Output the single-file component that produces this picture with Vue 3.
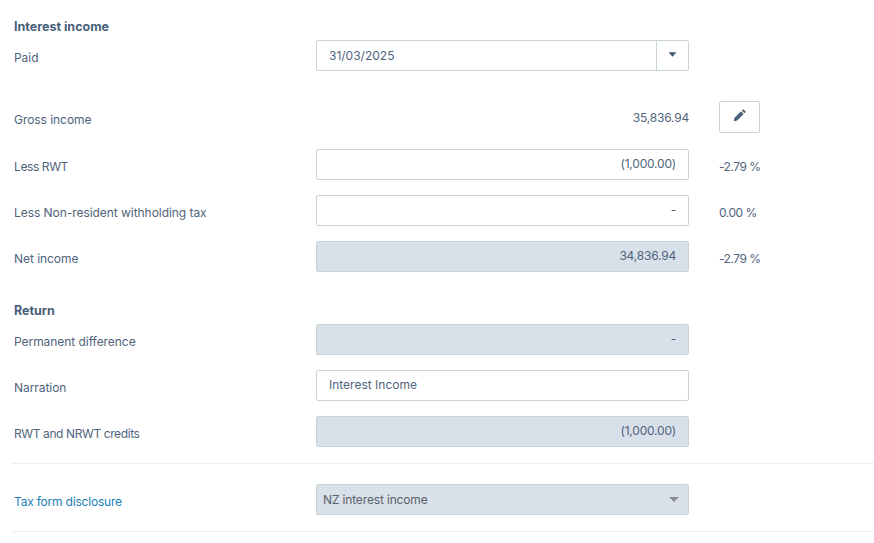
<script setup>
const sectionOne = [
  { label: 'Less RWT', value: '(1,000.00)', note: '-2.79 %', snug: true },
  { label: 'Less Non-resident withholding tax', value: '-', note: '0.00 %' },
  { label: 'Net income', value: '34,836.94', note: '-2.79 %', readonly: true },
]
</script>

<template>
  <div class="page">
    <h4 class="heading first">Interest income</h4>
    <div class="row">
      <span class="label">Paid</span>
      <div class="date field">
        <span>31/03/2025</span>
        <span class="date-btn">
          <svg width="9" height="5" viewBox="0 0 9 5"><path d="M0.5 0.3h8L4.5 4.7z" fill="#44566c" /></svg>
        </span>
      </div>
    </div>

    <div class="row gross">
      <span class="label">Gross income</span>
      <span class="plain">35,836.94</span>
      <span class="edit">
        <svg width="13" height="13" viewBox="0 0 14 14">
          <path d="M.8 13.2l.8-3.7 7-7 2.9 2.9-7 7zM9.5 1.6l.9-.9q.6-.6 1.2 0l1.7 1.7q.6.6 0 1.2l-.9.9z" fill="#4b6079" />
        </svg>
      </span>
    </div>

    <div v-for="r in sectionOne" :key="r.label" class="row tight">
      <span class="label" :class="{ snug: r.snug }">{{ r.label }}</span>
      <div class="field num" :class="{ readonly: r.readonly }">{{ r.value }}</div>
      <span class="note">{{ r.note }}</span>
    </div>

    <h4 class="heading second">Return</h4>
    <div class="row">
      <span class="label">Permanent difference</span>
      <div class="field num readonly">-</div>
    </div>
    <div class="row tight">
      <span class="label">Narration</span>
      <div class="field">Interest Income</div>
    </div>
    <div class="row tight">
      <span class="label snug">RWT and NRWT credits</span>
      <div class="field num readonly">(1,000.00)</div>
    </div>

    <hr class="rule first-rule" />
    <div class="row">
      <span class="label link">Tax form disclosure</span>
      <div class="field readonly select">
        <span>NZ interest income</span>
        <svg width="10" height="5" viewBox="0 0 10 5"><path d="M0 0h10L5 5z" fill="#8e8e8e" /></svg>
      </div>
    </div>
    <hr class="rule last-rule" />
  </div>
</template>

<style>
html, body { background: #fff; }
</style>

<style scoped>
.page {
  width: 874px;
  height: 543px;
  box-sizing: border-box;
  padding: 19px 0 0 12px;
  font-family: Inter, "Noto Sans", sans-serif;
  font-size: 12px;
  color: #4f647c;
  overflow: hidden;
}
.heading {
  margin: 0 0 0 2px;
  font-size: 12.5px;
  line-height: 15px;
  font-weight: 700;
  color: #47607a;
}
.first { margin-bottom: 6px; }
.second { margin-top: 31px; margin-bottom: 6px; }
.row {
  display: grid;
  grid-template-columns: 304px 373px auto;
  align-items: center;
  height: 31px;
  justify-content: start;
}
.tight { margin-top: 15px; }
.gross { margin-top: 30px; height: 32px; }
.gross + .tight { margin-top: 16px; }
.label { padding: 4px 0 0 2px; letter-spacing: -0.05px; }
.snug { letter-spacing: -0.4px; }
.link { color: #1a7fb5; letter-spacing: -0.2px; }
.field {
  box-sizing: border-box;
  height: 31px;
  border: 1px solid #c8d5d8;
  border-radius: 2px;
  background: #fff;
  padding: 0 12px 2px;
  display: flex;
  align-items: center;
}
.num { justify-content: flex-end; letter-spacing: -0.2px; }
.readonly { background: #d8e0ea; }
.date { padding: 0 0 0 12px; justify-content: space-between; }
.date-btn {
  width: 32px;
  height: 100%;
  border-left: 1px solid #c8d5d8;
  display: flex;
  align-items: center;
  justify-content: center;
  padding-bottom: 2px;
  box-sizing: border-box;
}
.plain { text-align: right; letter-spacing: -0.2px; }
.edit {
  box-sizing: border-box;
  width: 41px;
  height: 32px;
  margin-left: 30px;
  border: 1px solid #c8d5d8;
  border-radius: 2px;
  display: flex;
  align-items: center;
  justify-content: center;
  padding-bottom: 3px;
}
.note { margin-left: 30px; padding-top: 4px; letter-spacing: -0.5px; }
.select {
  padding: 0 9px 1px 6px;
  justify-content: space-between;
  letter-spacing: -0.15px;
  color: #5a6068;
}
.select svg { margin-top: 1px; }
.rule {
  margin: 0;
  border: 0;
  border-top: 1px solid #ebedef;
}
.first-rule { margin: 16px 0 20px; }
.last-rule { margin-top: 16px; }
</style>
